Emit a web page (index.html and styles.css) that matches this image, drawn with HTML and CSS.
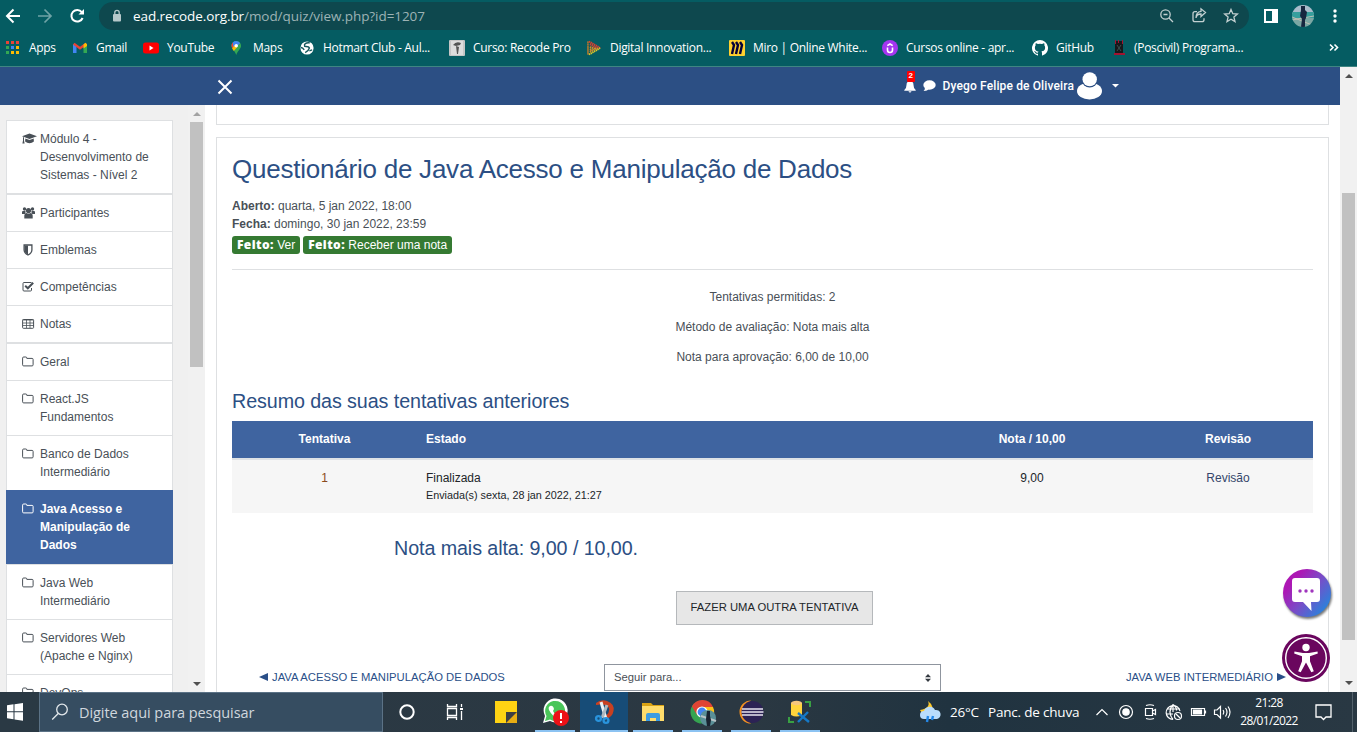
FILE: index.html
```html
<!DOCTYPE html>
<html lang="pt-br">
<head>
<meta charset="utf-8">
<title>Questionário de Java Acesso e Manipulação de Dados</title>
<link rel="stylesheet" href="styles.css">
</head>
<body>
<svg class="defs" aria-hidden="true">
  <symbol id="folder" viewBox="0 0 12 11"><path d="M.6 8.8V2.1Q.6 1 1.7 1h2.1q1 0 1 1v.4h5.3q1 0 1 1v5.4q0 1.1-1 1.1H1.700Q.6 9.900.6 8.800z" fill="none" stroke="currentColor" stroke-width="1"/></symbol>
</svg>

<header class="browser">
  <div class="toolbar">
    <svg class="nav-icons" width="99" height="32" fill="none" stroke="#fff" stroke-width="2">
      <path d="M20 16H7.500M13.500 9.500 7 16l6.500 6.500"/>
      <path d="M38 16h12.500M44.500 9.500 51 16l-6.500 6.500" stroke="#6fa3a6" stroke-width="1.700"/>
      <path d="M81.800 12.200A5.800 5.800 0 1 0 82.600 18"/><path d="M84 9v5.500h-5.500z" fill="#fff" stroke="none"/>
    </svg>
    <div class="omnibox">
      <svg class="lock" width="10" height="14"><rect x="1" y="5" width="8" height="7.500" rx="1" fill="#b6c8ca"/><path d="M2.800 6V3.600a2.200 2.200 0 0 1 4.400 0V6" fill="none" stroke="#b6c8ca" stroke-width="1.300"/></svg>
      <span class="url"><b>ead.recode.org.br</b>/mod/quiz/view.php?id=1207</span>
      <svg class="omni-icons" width="90" height="28" fill="none" stroke="#c3d0d1" stroke-width="1.300">
        <circle cx="6.500" cy="12.500" r="4.700"/><path d="m10 16 4 4M4.500 12.500h4"/>
        <path d="M38 9.700h-2q-2 0-2 2v6q0 2 2 2h7q2 0 2-2v-1.500M37 16q.5-4 5-4v2.600l4.500-4-4.500-3.800v2.600Q37 10 37 16z"/>
        <path d="m72 7.500 1.800 4.200 4.600.4-3.500 3 1.100 4.500-4-2.400-4 2.400 1.100-4.500-3.500-3 4.600-.4z"/>
      </svg>
    </div>
    <svg class="right-icons" width="108" height="32">
      <rect x="16" y="10" width="12" height="12" fill="none" stroke="#fff" stroke-width="2"/><rect x="23" y="10" width="6" height="12" fill="#fff"/>
      <clipPath id="av"><circle cx="54" cy="16" r="11"/></clipPath>
      <g clip-path="url(#av)"><rect x="43" y="5" width="22" height="9" fill="#a9bccb"/><rect x="43" y="12" width="22" height="8" fill="#369f9d"/><rect x="43" y="18" width="22" height="9" fill="#7ba7a4"/><path d="m43 20 22-4M43 17l20 8" stroke="#c0bfb3"/><path d="M52 6h4v4l2 2-1 6-1 2v7h-4l1-8-2-3 1-6z" fill="#17263f"/></g>
      <g fill="#fff"><circle cx="86" cy="11" r="1.700"/><circle cx="86" cy="16" r="1.700"/><circle cx="86" cy="21" r="1.700"/></g>
    </svg>
  </div>
  <nav class="bookmarks">
    <a><svg viewBox="0 0 13 13"><path d="M0 0h3v3H0zM5 0h3v3H5zM10 0h3v3h-3z" fill="#ea4335"/><path d="M0 5h3v3H0z" fill="#34a853"/><path d="M5 5h3v3H5z" fill="#4285f4"/><path d="M10 5h3v3h-3zM5 10h3v3H5zM10 10h3v3h-3z" fill="#fbbc04"/><path d="M0 10h3v3H0z" fill="#34a853"/></svg><span>Apps</span></a>
    <a><svg viewBox="0 0 14 16"><path d="M0 4v9h3.500V6z" fill="#4285f4"/><path d="M14 4v9h-3.500V6z" fill="#34a853"/><path d="m0 4.500 7 5.300 7-5.300-1.500-1.700L7 6.800 1.500 2.800z" fill="#ea4335"/><path d="m10.500 4.500 2-1.700 1.500 1.500V6l-3.500 2.500z" fill="#fbbc04"/></svg><span>Gmail</span></a>
    <a><svg viewBox="0 0 16 16"><rect y="2.500" width="16" height="11" rx="2.500" fill="#f00"/><path d="m6.500 5.500 4 2.500-4 2.500z" fill="#fff"/></svg><span>YouTube</span></a>
    <a><svg viewBox="0 0 16 16"><path d="M6 16C5 12 .5 9 .5 5.500a5.500 5.500 0 0 1 11 0C11.500 9 7 12 6 16z" fill="#34a853"/><path d="M.5 5.500A5.500 5.500 0 0 1 2 1.700l2.500 3-3 4z" fill="#ea4335"/><path d="M2 1.700A5.500 5.500 0 0 1 10.500 2.500L3 9z" fill="#4285f4"/><path d="m1.300 8.500 3-4L7 7l-3.800 4.300z" fill="#fbbc04"/><circle cx="6" cy="5.500" r="2" fill="#fff"/></svg><span>Maps</span></a>
    <a><svg viewBox="0 0 16 16"><circle cx="7.500" cy="8" r="7" fill="#fff"/><path d="M10.500 2.500C6 2 4 4 5 6.300 7 6.500 9.500 6 10 8q-1 3.500-4.500 5M1 7.500q2 .2 3.500 2.500M10 11l3-1" fill="none" stroke="#16585d" stroke-width="1.500"/></svg><span>Hotmart Club - Aul...</span></a>
    <a><svg viewBox="0 0 16 16"><rect width="16" height="16" rx="1" fill="#c6c6c6"/><rect x="2" y="1" width="12" height="14" fill="#ddd"/><path d="M4 5q3-4 8-2l-1 2-4 1zM7 6l3 1-1 7H8z" fill="#555"/></svg><span>Curso: Recode Pro</span></a>
    <a><svg viewBox="0 0 16 16" fill="none" stroke-width="2" stroke-dasharray="1.500 .6"><path d="M1 1v14" stroke="#c47b28"/><path d="m2 1 12 7M3 4l9 5" stroke="#d94130"/><path d="m2 15 12-7" stroke="#dfc728"/><path d="m3 12 8-4M3 7l6 2M3 10l3-1" stroke="#d98d29"/></svg><span>Digital Innovation...</span></a>
    <a><svg viewBox="0 0 16 16"><rect width="16" height="16" rx="1" fill="#ffd02f"/><path d="m3 2 2 3-2 9M7 2l2 3-2 9M11 2l2 3-2 9" fill="none" stroke="#050038" stroke-width="2.400"/></svg><span>Miro | Online White...</span></a>
    <a><svg viewBox="0 0 16 16"><circle cx="8" cy="8" r="8" fill="#a435f0"/><path d="M5.500 7.500V10q0 2.500 2.500 2.500t2.500-2.500V7.500M5.300 5.600 8 4l2.700 1.600" fill="none" stroke="#fff" stroke-width="1.600"/></svg><span>Cursos online - apr...</span></a>
    <a><svg viewBox="0 0 16 16"><path d="M8 0a8 8 0 0 0-2.500 15.600c.4.100.5-.2.500-.4v-1.500c-2.200.5-2.700-1-2.700-1-.4-.9-.9-1.200-.9-1.200-.7-.5.100-.5.100-.5.800.1 1.200.8 1.200.8.700 1.300 1.900.9 2.300.7.100-.5.300-.9.500-1.100-1.800-.2-3.600-.9-3.600-4 0-.9.300-1.600.8-2.100-.1-.2-.4-1 .1-2.100 0 0 .7-.2 2.200.8a7.500 7.500 0 0 1 4 0c1.500-1 2.200-.8 2.200-.8.400 1.100.2 1.900.1 2.100.5.600.8 1.300.8 2.100 0 3.100-1.900 3.700-3.700 4 .3.200.6.700.6 1.500v2.300c0 .2.100.5.500.4A8 8 0 0 0 8 0z" fill="#fff"/></svg><span>GitHub</span></a>
    <a><svg viewBox="0 0 13 15"><path d="M2 1h8v12H2z" fill="#17181b"/><path d="M1 13h11v2H1zM2 0h1v4H2zM5 0h1v3H5zM9 0h1v4H9z" fill="#a31230"/><path d="m4 5 4 6M8 5l-4 6" stroke="#38504f"/></svg><span>(Poscivil) Programa...</span></a>
    <svg class="more" width="10" height="10" fill="none" stroke="#fff" stroke-width="1.600"><path d="m1 1.500 3 3-3 3M5.500 1.500l3 3-3 3"/></svg>
  </nav>
</header>

<div class="viewport">
  <div class="page">
    <div class="navbar">
      <svg class="close" width="16" height="16" stroke="#fff" stroke-width="2"><path d="m1.500 1.500 13 13M14.500 1.500l-13 13"/></svg>
      <div class="user">
        <span class="bell"><svg width="12" height="13" fill="#fff"><path d="M6 1q3.500.3 3.500 4 0 3.500 2.200 5v.8H.3V10Q2.500 8.500 2.500 5 2.500 1.300 6 1zM4.500 11.200h3q-.3 1.300-1.500 1.300t-1.500-1.300z"/></svg><i>2</i></span>
        <svg class="chat" width="13" height="12" fill="#fff"><ellipse cx="6.500" cy="5" rx="6.200" ry="4.700"/><path d="M2 7q0 3-1.500 4Q4 11.300 6 9z"/></svg>
        <span class="name">Dyego Felipe de Oliveira</span>
        <svg class="person" width="26" height="28" fill="#fff"><ellipse cx="12.500" cy="19" rx="12.500" ry="8.500"/><circle cx="12.700" cy="7.500" r="8" fill="#2c4f84"/><ellipse cx="12.700" cy="7.300" rx="7.200" ry="7"/></svg>
        <svg class="caret" width="7" height="4"><path d="M0 0h7L3.500 3.500z" fill="#fff"/></svg>
      </div>
    </div>
    <div class="columns">
      <aside class="drawer">
        <div class="drawer-list">
          <div class="group">
            <a><svg viewBox="0 0 15 12" fill="currentColor"><path d="M7.500.5 15 3.200 7.500 6 0 3.200zM3.300 5.500l4.200 1.500 4.200-1.500.2 3Q10 10.300 7.500 10.300T3.100 8.500zM1 4l1 .4v3l.6 3H.4l.6-3z"/></svg><span>Módulo 4 - Desenvolvimento de Sistemas - Nível 2</span></a>
          </div>
          <div class="group">
            <a><svg viewBox="0 0 15 12" fill="currentColor"><circle cx="2.500" cy="2" r="1.700"/><circle cx="10.500" cy="2" r="1.700"/><circle cx="6.500" cy="3.500" r="2.600"/><path d="M0 7V5q0-1 1-1h2.500v1.500L3 7zM13 7V5q0-1-1-1H9.500v1.500L10 7zM2.300 11.500V8.500Q2.300 6 4.500 6q2 1.200 4 0 2.200 0 2.200 2.500v3z"/></svg><span>Participantes</span></a>
            <a><svg viewBox="0 0 15 12"><path d="M2.100 1h7.800v5q0 3-3.900 5-3.900-2-3.900-5z" fill="none" stroke="currentColor" stroke-width="1.300"/><path d="M6 1.500H2.500V6q0 3 3.500 4.500z" fill="currentColor"/></svg><span>Emblemas</span></a>
            <a><svg viewBox="0 0 15 12" fill="none" stroke="currentColor"><path d="M9.500 1.500H2q-1 0-1 1v6.500q0 1 1 1h6.500q1 0 1-1V7"/><path d="m3.200 4.800 2.600 2.500 5.400-5.500" stroke-width="2"/></svg><span>Competências</span></a>
            <a><svg viewBox="0 0 15 12" fill="none" stroke="currentColor"><rect x=".6" y="1.500" width="11" height="8.800" rx=".8"/><path d="M.5 2h11M1 5h11M1 7.500h11M4.500 2v8M8 2v8" stroke-width=".8"/></svg><span>Notas</span></a>
          </div>
          <div class="group">
            <a><svg viewBox="0 0 15 12"><use href="#folder" width="12" height="11"/></svg><span>Geral</span></a>
            <a><svg viewBox="0 0 15 12"><use href="#folder" width="12" height="11"/></svg><span>React.JS Fundamentos</span></a>
            <a><svg viewBox="0 0 15 12"><use href="#folder" width="12" height="11"/></svg><span>Banco de Dados Intermediário</span></a>
            <a class="active"><svg viewBox="0 0 15 12"><use href="#folder" width="12" height="11"/></svg><span>Java Acesso e Manipulação de Dados</span></a>
            <a><svg viewBox="0 0 15 12"><use href="#folder" width="12" height="11"/></svg><span>Java Web Intermediário</span></a>
            <a><svg viewBox="0 0 15 12"><use href="#folder" width="12" height="11"/></svg><span>Servidores Web (Apache e Nginx)</span></a>
            <a><svg viewBox="0 0 15 12"><use href="#folder" width="12" height="11"/></svg><span>DevOps</span></a>
          </div>
        </div>
        <div class="scroll inner"><i class="up"></i><b></b><i class="down"></i></div>
      </aside>
      <main>
        <div class="card stub"></div>
        <section class="card quiz">
          <h2>Questionário de Java Acesso e Manipulação de Dados</h2>
          <p class="date"><b>Aberto:</b> quarta, 5 jan 2022, 18:00</p>
          <p class="date"><b>Fecha:</b> domingo, 30 jan 2022, 23:59</p>
          <div class="badges"><span><b>Feito:</b> Ver</span><span><b>Feito:</b> Receber uma nota</span></div>
          <hr>
          <div class="info">
            <p>Tentativas permitidas: 2</p>
            <p>Método de avaliação: Nota mais alta</p>
            <p>Nota para aprovação: 6,00 de 10,00</p>
          </div>
          <h3>Resumo das suas tentativas anteriores</h3>
          <div class="row head"><b>Tentativa</b><b>Estado</b><b>Nota / 10,00</b><b>Revisão</b></div>
          <div class="row body"><span class="attempt">1</span><span>Finalizada<small>Enviada(s) sexta, 28 jan 2022, 21:27</small></span><span>9,00</span><a>Revisão</a></div>
          <h3 class="best">Nota mais alta: 9,00 / 10,00.</h3>
          <div class="retry"><button>FAZER UMA OUTRA TENTATIVA</button></div>
          <div class="jump">
            <a><svg width="9" height="8"><path d="M0 4 9 0v8z" fill="#2a4f88"/></svg><span>JAVA ACESSO E MANIPULAÇÃO DE DADOS</span></a>
            <div class="select"><span>Seguir para...</span><svg width="6" height="8" fill="#343a40"><path d="M0 3.300 3 0l3 3.300zM0 4.700h6L3 8z"/></svg></div>
            <a class="next"><span>JAVA WEB INTERMEDIÁRIO</span><svg width="9" height="8"><path d="M9 4 0 0v8z" fill="#2a4f88"/></svg></a>
          </div>
        </section>
      </main>
    </div>
  </div>
  <div class="scroll outer"><i class="up"></i><b></b><i class="down"></i></div>
  <svg class="float bubble" width="54" height="54">
    <defs><linearGradient id="g" x1="0" y1=".1" x2="1" y2=".9"><stop offset=".2" stop-color="#ad17b4"/><stop offset=".55" stop-color="#7550c9"/><stop offset="1" stop-color="#168fe0"/></linearGradient></defs>
    <circle cx="25" cy="25" r="24" fill="url(#g)"/><path d="M13 10h22q3 0 3 3v18q0 3-3 3h-6l.5 9L21 34h-8q-3 0-3-3V13q0-3 3-3z" fill="#fff"/><g fill="#a035bd"><circle cx="18" cy="23" r="1.700"/><circle cx="24" cy="23" r="1.700"/><circle cx="30" cy="23" r="1.700"/></g>
  </svg>
  <svg class="float access" width="48" height="48">
    <circle cx="24" cy="24" r="24" fill="#6a065e"/><circle cx="24" cy="24" r="20.300" fill="none" stroke="#fff" stroke-width="1.400"/>
    <g fill="#fff"><circle cx="24" cy="13.500" r="3.700"/><path d="M12.500 17.500 21 19h6l8.500-1.500.3 2L28 22.200v5l3.800 10-2.500 1L24 28.500 18.700 38.200l-2.500-1 3.800-10v-5l-7.800-2.700z"/></g>
  </svg>
</div>

<footer class="taskbar">
  <svg class="start" width="39" height="40" fill="#fff"><path d="m7 13.300 6.500-1v7H7zM14.500 12.200l8.500-1.300v8.400h-8.500zM7 20.300h6.500v7l-6.500-1zM14.500 20.300H23v8.500l-8.500-1.300z"/></svg>
  <div class="search"><svg width="18" height="18" fill="none" stroke="#e3e8ec" stroke-width="1.300"><circle cx="11" cy="6.500" r="5.300"/><path d="m7.200 10.500-6 6"/></svg><span>Digite aqui para pesquisar</span></div>
  <div class="apps">
    <svg viewBox="0 0 48 40"><circle cx="24" cy="20" r="6.700" fill="none" stroke="#fff" stroke-width="2"/></svg>
    <svg viewBox="0 0 48 40" fill="none" stroke="#fff" stroke-width="1.300"><path d="M16.500 12v2.500h9V12M16.500 28v-2.500h9V28M16.500 16.500h9v7h-9zM30.500 12v3M30.500 19v9"/><path d="M29 17h3" stroke-width="2"/></svg>
    <svg class="sticky" viewBox="0 0 48 40"><path d="M13 9h22v11L24 31H13z" fill="#ffd313"/><path d="M24 20h11v11H24z" fill="#3d3e43"/><path d="M35 20v11H24z" fill="#e7ad13"/></svg>
    <svg class="run" viewBox="0 0 48 40"><path d="m12 31 2-7A12 12 0 1 1 19 29z" fill="#fff"/><path d="m14 29 1.500-5A10 10 0 1 1 19 27.500z" fill="#4ac65a"/><path d="M19 14q3-1 4 3l-1 2q1 3 4 4l2-2q4 1 3 4-8 3-13-7-1-3 1-4z" fill="#fff"/><circle cx="30" cy="26" r="8" fill="#ed1116"/><path d="M30 21v6M30 29v2" stroke="#fff" stroke-width="2"/></svg>
    <svg class="run current" viewBox="0 0 48 40"><path d="M16 11q5-4 11-2 8 3 6.500 10-1 6-7.500 8l-1-3q5-3 4-8-3-5-13-3z" fill="#c84021"/><path d="m21 10 5 17" stroke="#eef2f4" stroke-width="3"/><path d="m27 13-5 13" stroke="#aeb9c0" stroke-width="3"/><g fill="none" stroke="#2993dc" stroke-width="2.400"><circle cx="18.500" cy="26.500" r="2.400"/><circle cx="26" cy="28.500" r="2.400"/></g></svg>
    <svg class="run" viewBox="0 0 48 40"><path d="M13 11h9l2 2h11v4H13z" fill="#d9a213"/><path d="M13 14h22v15H13z" fill="#ffdc6b"/><path d="M17 29v-6q0-2 2-2h10q2 0 2 2v6h-4v-3h-6v3z" fill="#3d9ce1"/></svg>
    <svg class="run" viewBox="0 0 48 40"><circle cx="24" cy="20" r="11.500" fill="#35a451"/><path d="M14 14.500A11.500 11.500 0 0 1 35 15H24a6 6 0 0 0-5 8z" fill="#df4334"/><path d="M24 15h11a11.500 11.500 0 0 1-10 16.500L29 23z" fill="#fbc117"/><circle cx="24" cy="20" r="5.600" fill="#fff"/><circle cx="24" cy="20" r="4.400" fill="#4285f4"/><circle cx="30" cy="26" r="8" fill="#5a9098"/><path d="m23 24 15 5" stroke="#b9c4c7" stroke-width="2"/><path d="M29 19h3v5l1 4-1 6h-3l-1-7z" fill="#192330"/></svg>
    <svg class="run" viewBox="0 0 48 40"><path d="M24 8.500a11.500 11.500 0 0 0 0 23A14 14 0 0 1 24 8.500z" fill="#f59222"/><circle cx="25.500" cy="20" r="11" fill="#2c2255"/><path d="M15 17h21M14.500 20h22M15 23h21" stroke="#e7e5ef" stroke-width="1.700"/></svg>
    <svg class="run" viewBox="0 0 48 40"><path d="M15 11v12q5.500 3 11 0V11z" fill="#ffd43c"/><ellipse cx="20.500" cy="11" rx="5.500" ry="2.200" fill="#f6c77d"/><path d="M29 10h5v5M13 25v5h5" stroke="#39a043" stroke-width="2" fill="none"/><path d="m22 21 11 9M32 20l-10 10" stroke="#1579c7" stroke-width="2.400"/></svg>
  </div>
  <div class="tray">
    <svg class="weather" width="24" height="24"><path d="M10 1q3 7-8 9 3 6 10 4 6-7-2-13z" fill="#ffc928"/><path d="M6 19a4 4 0 0 1 0-8 6 6 0 0 1 11-1 4.500 4.500 0 0 1 2 9z" fill="#b9dcfb"/><path d="m10 16-1 6M15 16l-1 4" stroke="#2588e8" stroke-width="2.400"/></svg>
    <span class="temp">26°C</span><span class="cond">Panc. de chuva</span>
    <svg class="tray-icons" width="142" height="40" fill="none" stroke="#fff" stroke-width="1.200">
      <path d="m6.500 23 5.500-5.500 5.500 5.500"/><circle cx="36" cy="20" r="6.500"/><circle cx="36" cy="20" r="3.200" fill="#fff"/>
      <path d="M55.500 16.500h7v7h-7zM62.500 19l3-1.500v5l-3-1.500M56 13.500q4-1.500 8 0M56 26.500q4 1.500 8 0"/>
      <path d="M90 19a7 7 0 1 0-7 8.500M83 12.500q-6 7 0 15M83 12.500q4 3 3.500 6M77 17h13M76 22h7M83 12.500V20"/><circle cx="88" cy="24" r="3.500"/><path d="m86 22 4 4"/>
      <path d="M101.500 16.500h13v7h-13zM115.500 18.500v3"/><path d="M103.500 18h8v4h-8z" fill="#fff"/>
      <path d="M124.500 18v4.500h2.500l3.500 3.500V14.500L127 18zM133 18q1.500 2 0 4.500M135.500 16q3 4 0 8.500M138 14.500q4 5.500 0 11.500"/>
    </svg>
    <div class="clock"><span>21:28</span><span>28/01/2022</span></div>
    <svg class="notif" width="18" height="18" fill="none" stroke="#fff" stroke-width="1.300"><path d="M1 2h15v12h-5l-2.500 2.500L6 14H1z"/></svg>
    <i class="peek"></i>
  </div>
</footer>
</body>
</html>
```

FILE: styles.css
```css
* { box-sizing: border-box; }
body { margin: 0; width: 1357px; height: 732px; overflow: hidden; background: #fff; font: 12px/18px "Liberation Sans", Arial, sans-serif; color: #495057; }
p, h2, h3 { margin: 0; }
svg { display: block; flex: none; }
.defs { position: absolute; width: 0; height: 0; }

.browser { height: 67px; background: #055c62; border-bottom: 1px solid #3f8582; font-family: "Open Sans", "Noto Sans", sans-serif; color: #fff; }
.toolbar { display: flex; height: 32px; align-items: center; }
.omnibox { display: flex; align-items: center; width: 1150px; height: 28px; border-radius: 14px; background: #0e484e; padding-left: 13px; }
.url { margin-left: 11px; flex: 1; font-size: 13.500px; letter-spacing: -.07px; color: #9db3b5; white-space: nowrap; }
.url b { font-weight: 400; color: #fff; }
.bookmarks { position: relative; display: grid; grid-template-columns: 67px 70px 88px 69px 149px 138px 142px 153px 150px 81px 150px; padding-left: 6px; height: 31px; align-items: center; }
.bookmarks a { display: flex; align-items: center; gap: 8px; font-size: 12px; letter-spacing: -.3px; white-space: nowrap; }
.bookmarks a svg { width: 16px; height: 16px; }
.bookmarks a:first-child svg { width: 13px; height: 13px; margin-right: 2px; }
.bookmarks a:nth-child(2) svg { width: 14px; height: 16px; margin-right: 1px; }
.bookmarks a:nth-child(4) svg { width: 14px; height: 16px; }
.bookmarks a:nth-child(5) svg { width: 15px; }
.bookmarks a:nth-child(7) svg { width: 15px; }
.bookmarks a:nth-child(11) svg { width: 13px; height: 15px; }
.more { position: absolute; left: 1329px; top: 11px; }

.viewport { position: relative; display: flex; height: 625px; overflow: hidden; }
.page { width: 1340px; height: 625px; }
.navbar { display: flex; align-items: center; justify-content: space-between; height: 38px; padding: 0 221px 0 217px; background: #2c4f84; color: #fff; }
.close { margin-top: 2px; }
.user { display: flex; align-items: center; }
.bell { position: relative; margin-right: 7px; }
.bell i { position: absolute; left: 3px; top: -9px; width: 8px; height: 11px; border-radius: 1px; background: #f00; font: bold 8px/10px "Liberation Sans", sans-serif; text-align: center; }
.chat { margin-right: 7px; }
.name { font-family: Roboto, sans-serif; font-size: 12px; font-weight: 500; letter-spacing: .13px; margin-right: 3px; white-space: nowrap; }
.person { margin-right: 9px; }
.columns { display: flex; height: 587px; }
.drawer { display: flex; width: 205px; height: 587px; background: #f0f0f0; overflow: hidden; }
.drawer-list { width: 188px; padding: 15px 15px 0 6px; }
.group a { display: flex; min-height: 38px; padding: 9px 15px; border: 1px solid #dee0e2; background: #fff; color: #495057; }
.group a + a { margin-top: -1px; }
.group a svg { width: 15px; height: 12px; margin: 3px 3px 0 0; }
.group a.active { position: relative; background: #3f64a0; border-color: #3f64a0; color: #fff; font-weight: bold; }
.group a.active + a { margin-top: 0; }
.scroll { display: flex; flex-direction: column; align-items: center; width: 17px; background: #f1f1f1; }
.scroll b { background: #c1c1c1; width: 13px; }
.scroll i { width: 0; height: 0; border: 4px solid transparent; }
.scroll .up { border-top: 0; border-bottom-color: #505050; }
.scroll .down { border-bottom: 0; border-top-color: #505050; }
.inner .up { margin-top: 7px; border-bottom-color: #a3a3a3; }
.inner b { height: 245px; margin-top: 6px; }
.inner .down { margin: auto 0 6px; }
.outer { height: 625px; }
.outer .up { margin-top: 7px; }
.outer b { height: 447px; margin-top: 115px; }
.outer .down { margin: auto 0 7px; }

main { width: 1135px; padding: 0 11px; overflow: hidden; }
.card { border: 1px solid #dee0e2; background: #fff; }
.stub { height: 20px; border-top: 0; margin-bottom: 12px; }
.quiz { height: 640px; padding: 0 15px; }
h2 { font-size: 26px; font-weight: 400; letter-spacing: -.23px; line-height: 32px; color: #2c4f84; padding-top: 15px; white-space: nowrap; }
h2 + .date { margin-top: 12px; }
.badges { display: flex; gap: 3px; margin-top: 3px; color: #fff; }
.badges span { height: 18px; padding: 0 5px; border-radius: 3px; background: #357a32; font-size: 12px; line-height: 18px; white-space: nowrap; }
.badges b { font-family: "Open Sans", sans-serif; font-weight: 800; letter-spacing: .4px; }
hr { height: 1px; border: 0; background: #dee0e2; margin: 15px 0 18px; }
.info { text-align: center; }
.info p { margin-bottom: 12px; }
h3 { font-size: 19.700px; font-weight: 400; letter-spacing: -.08px; line-height: 24px; color: #2c4f84; white-space: nowrap; }
.info + h3 { margin-top: 23px; margin-bottom: 8px; }
.row { display: grid; grid-template-columns: 185px 504px 222px 170px; text-align: center; }
.row > :nth-child(2) { text-align: left; padding-left: 9px; }
.head { height: 37px; padding-top: 9px; background: #3f64a0; color: #fff; }
.body { height: 55px; padding-top: 9px; border-top: 2px solid #dee2e6; background: #f6f6f6; color: #212529; }
.body small { display: block; font-size: 10.800px; line-height: 16px; }
.body .attempt { color: #8a4a1c; }
.body a { color: #34466b; }
.best { margin: 23px 0 0 162px; }
.retry { display: flex; justify-content: center; margin: 31px 0 0 4px; }
button { width: 197px; height: 34px; border: 1px solid #b5b8bb; background: #e7e7e7; color: #212529; font: 11.250px "Liberation Sans", sans-serif; padding: 0 0 2px; white-space: nowrap; }
.jump { display: grid; grid-template-columns: 372px 337px 1fr; margin-top: 39px; align-items: center; color: #2a4f88; font-size: 11.250px; }
.jump a { display: flex; align-items: center; gap: 4px; padding: 0 0 2px 27px; white-space: nowrap; }
.jump .next { justify-content: flex-end; padding: 0 27px 2px 0; }
.select { display: flex; align-items: center; justify-content: space-between; height: 27px; border: 1px solid #8f959e; padding: 0 9px; color: #495057; font-size: 11.250px; }
.select span { padding-bottom: 2px; }
.float { position: absolute; }
.bubble { left: 1282px; top: 501px; filter: drop-shadow(1px 2px 1px #0008); }
.access { left: 1282px; top: 567px; }

.taskbar { display: flex; height: 40px; background: linear-gradient(90deg, #2a3944, #2b3842 55%, #203340 70%, #293843); color: #fff; font-family: "Open Sans", "Noto Sans", sans-serif; }
.search { display: flex; align-items: center; gap: 10px; width: 344px; height: 40px; padding-left: 11px; border: 1px solid #5b7286; background: #364d61; color: #d0d7de; font-size: 14.500px; letter-spacing: -.06px; white-space: nowrap; }
.search span { padding-top: 1px; }
.apps { display: flex; width: 446px; }
.apps svg { width: 48px; height: 40px; }
.apps .sticky { margin: 0 1px 0 3px; }
.apps .run { margin-right: 1px; background: linear-gradient(#8cc3f2, #8cc3f2) center bottom / 40px 2px no-repeat; }
.apps .current { background: linear-gradient(#8cc3f2, #8cc3f2) center bottom / 48px 2px no-repeat #174c77; }
.tray { display: flex; align-items: center; padding-left: 89px; width: 528px; white-space: nowrap; }
.temp { width: 38px; margin-left: 8px; font-size: 13.500px; letter-spacing: -.2px; }
.cond { width: 102px; font-size: 13.500px; letter-spacing: -.2px; }
.clock { display: flex; flex-direction: column; width: 64px; margin-left: 5px; text-align: center; font-size: 12px; line-height: 18px; letter-spacing: -.6px; }
.notif { margin-left: 14px; }
.peek { width: 1px; height: 40px; margin-left: 19px; background: #53616b; }
```
